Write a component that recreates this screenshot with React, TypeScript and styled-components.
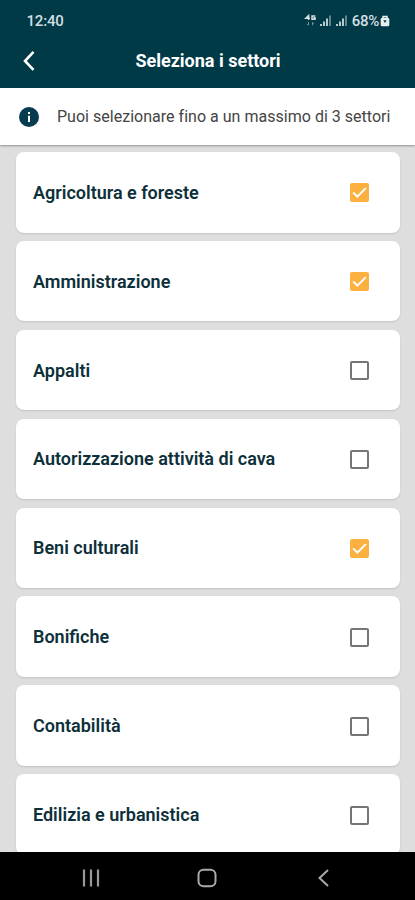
import React, { useState } from "react";
import styled, { createGlobalStyle } from "styled-components";

const GlobalStyle = createGlobalStyle`
  * { box-sizing: border-box; }
  body { margin: 0; font-family: Roboto, "Liberation Sans", sans-serif; }
`;

const Screen = styled.div`
  width: 415px;
  height: 900px;
  display: flex;
  flex-direction: column;
  overflow: hidden;
  background: #dedede;
`;

const Header = styled.header`
  flex: none;
  height: 88px;
  background: #003a47;
  color: #fff;
`;

const StatusBar = styled.div`
  height: 40px;
  padding: 1px 25px 0 26.5px;
  display: flex;
  align-items: center;
  justify-content: space-between;
  color: #d3dfe2;
`;

const Clock = styled.span`
  font-size: 15px;
  font-weight: 500;
  letter-spacing: -0.2px;
`;

const StatusIcons = styled.div`
  display: flex;
  align-items: center;
`;

const Battery = styled.span`
  margin-left: 1px;
  margin-right: 1px;
  font-size: 15px;
  font-weight: 500;
  letter-spacing: -0.3px;
`;

const TitleBar = styled.div`
  height: 42px;
  display: grid;
  grid-template-columns: 58px 1fr 58px;
  align-items: center;
`;

const IconButton = styled.button`
  width: 58px;
  height: 40px;
  padding: 0;
  border: 0;
  background: none;
  display: flex;
  align-items: center;
  justify-content: center;
`;

const Title = styled.h1`
  margin: 0;
  padding-left: 1px;
  text-align: center;
  font-size: 18px;
  line-height: 24px;
  font-weight: 700;
`;

const Notice = styled.section`
  flex: none;
  height: 57px;
  padding-left: 19px;
  display: flex;
  align-items: center;
  gap: 18px;
  background: #fff;
  box-shadow: 0 1px 2px rgba(0, 0, 0, 0.35);
  color: #444;
  font-size: 16px;
  letter-spacing: 0.02px;
  white-space: nowrap;
`;

const List = styled.main`
  flex: 1;
  min-height: 0;
  overflow: hidden;
  padding: 7px 15.5px 0 16px;
  display: flex;
  flex-direction: column;
  gap: 8.3px;
`;

const Card = styled.label`
  flex: none;
  height: 80.6px;
  padding: 1px 31px 0 17px;
  display: flex;
  align-items: center;
  justify-content: space-between;
  border-radius: 8px;
  background: #fff;
  box-shadow: 0 1px 2px rgba(0, 0, 0, 0.13);
`;

const Label = styled.span`
  color: #0d303a;
  font-size: 18px;
  line-height: 24px;
  font-weight: 600;
`;

const Check = styled.input`
  appearance: none;
  position: absolute;
  opacity: 0;
  margin: 0;
`;

const Box = styled.span<{ $on: boolean }>`
  width: 19px;
  height: 19px;
  display: flex;
  align-items: center;
  justify-content: center;
  border-radius: 2px;
  border: ${(p) => (p.$on ? "0" : "2px solid #757575")};
  background: ${(p) => (p.$on ? "#fbb03f" : "#fff")};
`;

const NavBar = styled.nav`
  flex: none;
  height: 48px;
  padding: 3px 33px 0;
  display: grid;
  grid-template-columns: repeat(3, 1fr);
  align-items: center;
  justify-items: center;
  background: #000;
`;

const Signal = () => (
  <svg width="16" height="13" viewBox="0 0 16 13">
    <g fill="#b9cacf">
      <rect x="1" y="10" width="2" height="2" />
      <rect x="4" y="7.5" width="2" height="4.5" />
      <rect x="7" y="4.5" width="2" height="7.5" />
    </g>
    <rect x="10" y="1.5" width="2" height="10.5" fill="#5f858e" />
  </svg>
);

const sectors = [
  "Agricoltura e foreste",
  "Amministrazione",
  "Appalti",
  "Autorizzazione attività di cava",
  "Beni culturali",
  "Bonifiche",
  "Contabilità",
  "Edilizia e urbanistica",
];

export default function App() {
  const [selected, setSelected] = useState([0, 1, 4]);
  const toggle = (i: number) =>
    setSelected((s) =>
      s.includes(i) ? s.filter((n) => n !== i) : s.length < 3 ? [...s, i] : s
    );

  return (
    <Screen>
      <GlobalStyle />
      <Header>
        <StatusBar>
          <Clock>12:40</Clock>
          <StatusIcons>
            <svg width="15" height="13" viewBox="0 0 15 13" fill="none" stroke="#d3dfe2">
              <path d="M4.6 6V1.5L1.8 4.3H6M11.3 2H8V5.2H11V3.7H9.5" strokeWidth="1.5" />
              <path d="M4.5 8v3M3 9.8l1.5 1.5M8.5 11.3v-3M8.5 8.3L10 9.8" stroke="#6f929a" />
            </svg>
            <Signal />
            <Signal />
            <Battery>68%</Battery>
            <svg width="10" height="13" viewBox="0 0 10 13">
              <path d="M3 4V2.5h4V4" fill="none" stroke="#e8eff1" strokeWidth="1.5" />
              <rect x="0.7" y="3.7" width="8.6" height="8.6" rx="1.5" fill="#e8eff1" />
              <path d="M3.3 6.3h3.4L5 9z" fill="#003a47" />
            </svg>
          </StatusIcons>
        </StatusBar>
        <TitleBar>
          <IconButton aria-label="Indietro">
            <svg width="16" height="22" viewBox="0 0 16 22">
              <path d="M12.5 1.8L4 11l8.5 8.8" fill="none" stroke="#fff" strokeWidth="2.6" />
            </svg>
          </IconButton>
          <Title>Seleziona i settori</Title>
        </TitleBar>
      </Header>
      <Notice>
        <svg width="20" height="20" viewBox="0 0 20 20">
          <circle cx="10" cy="10" r="10" fill="#063b50" />
          <rect x="9" y="5" width="2" height="2" fill="#fff" />
          <rect x="9" y="8.7" width="2" height="6.3" fill="#fff" />
        </svg>
        <span>Puoi selezionare fino a un massimo di 3 settori</span>
      </Notice>
      <List>
        {sectors.map((name, i) => {
          const on = selected.includes(i);
          return (
            <Card key={name}>
              <Label>{name}</Label>
              <Check type="checkbox" checked={on} onChange={() => toggle(i)} />
              <Box $on={on}>
                {on && (
                  <svg width="19" height="19" viewBox="0 0 19 19">
                    <path d="M3.2 9.5l4.2 4.2 8.4-8.6" fill="none" stroke="#fff" strokeWidth="2" />
                  </svg>
                )}
              </Box>
            </Card>
          );
        })}
      </List>
      <NavBar>
        <svg width="18" height="18" viewBox="0 0 18 18" stroke="#999" strokeWidth="2.2">
          <path d="M2 .5v17M9 .5v17M16 .5v17" />
        </svg>
        <svg width="20" height="20" viewBox="0 0 20 20">
          <rect x="1.5" y="1.7" width="17" height="16.6" rx="5" fill="none" stroke="#aaa" strokeWidth="2" />
        </svg>
        <svg width="14" height="20" viewBox="0 0 14 20">
          <path d="M11 2L2.5 10l8.5 8" fill="none" stroke="#aaa" strokeWidth="2" />
        </svg>
      </NavBar>
    </Screen>
  );
}
